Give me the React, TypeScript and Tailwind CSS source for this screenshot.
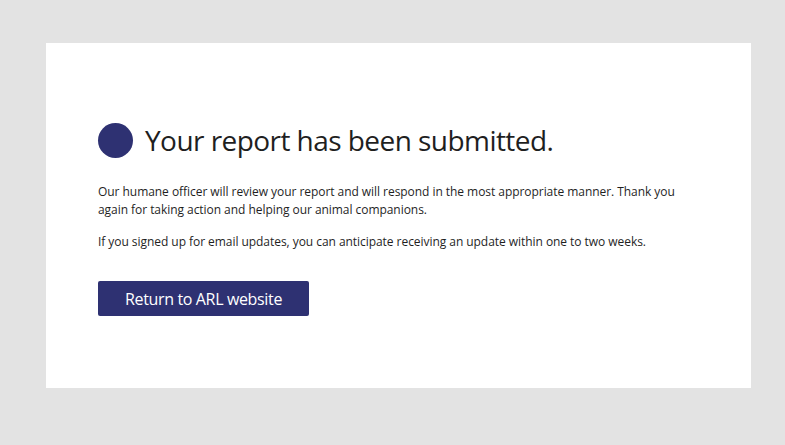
export default function App() {
  return (
    <div className="min-h-[445px] bg-[#e3e3e3] pt-[43px] pl-[46px] font-['Open_Sans',sans-serif]">
      <div className="w-[705px] h-[345px] bg-white pl-[52px] pt-[80px]">
        <div className="flex items-center gap-[12px]">
          <div className="w-[35px] h-[35px] rounded-full bg-[#2e3172]" />
          <h1 className="text-[28px] leading-[35px] text-[#1f1f1f] tracking-[-0.55px]">Your report has been submitted.</h1>
        </div>
        <p className="mt-[25px] w-[600px] text-[12px] leading-[18px] text-[#1f1f1f] tracking-[-0.05px]">
          Our humane officer will review your report and will respond in the most appropriate manner. Thank you again for taking action and helping our animal companions.
        </p>
        <p className="mt-[14px] text-[12px] leading-[18px] text-[#1f1f1f] tracking-[-0.05px]">
          If you signed up for email updates, you can anticipate receiving an update within one to two weeks.
        </p>
        <button className="mt-[30px] w-[211px] h-[35px] rounded-[2px] bg-[#2e3172] text-white text-[16px] tracking-[-0.35px]">
          Return to ARL website
        </button>
      </div>
    </div>
  );
}
